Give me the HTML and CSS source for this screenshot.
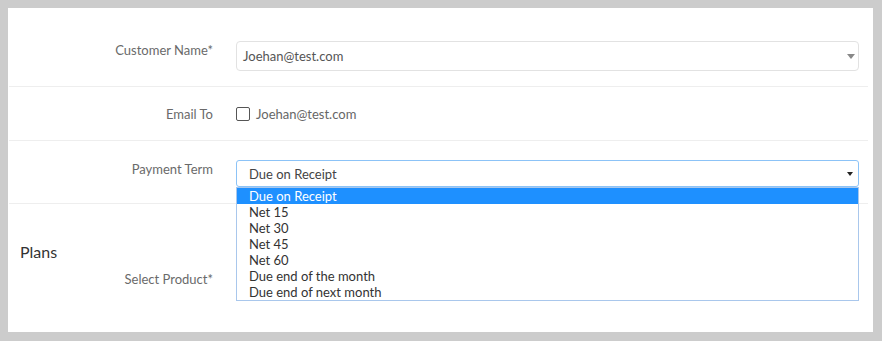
FILE: index.html
```html
<!DOCTYPE html>
<html lang="en">
<head>
    <meta charset="UTF-8">
    <meta name="viewport" content="width=device-width, initial-scale=1.0">
    <title>Invoice Form</title>
    <link rel="stylesheet" href="styles.css">
</head>
<body>
    <div class="panel">
        <div class="form-row row-customer">
            <label class="form-label">Customer Name*</label>
            <div class="form-field">
                <div class="select-box">
                    <span>Joehan@test.com</span>
                    <span class="caret"></span>
                </div>
            </div>
        </div>

        <div class="form-row row-email">
            <label class="form-label">Email To</label>
            <div class="form-field check-field">
                <input type="checkbox" id="emailTo">
                <label for="emailTo">Joehan@test.com</label>
            </div>
        </div>

        <div class="form-row row-term">
            <label class="form-label">Payment Term</label>
            <div class="form-field">
                <div class="select-box is-open">
                    <span>Due on Receipt</span>
                    <span class="caret caret-dark"></span>
                </div>
                <ul class="dropdown">
                    <li class="selected">Due on Receipt</li>
                    <li>Net 15</li>
                    <li>Net 30</li>
                    <li>Net 45</li>
                    <li>Net 60</li>
                    <li>Due end of the month</li>
                    <li>Due end of next month</li>
                </ul>
            </div>
        </div>

        <div class="section">
            <h3>Plans</h3>
            <div class="form-row plain">
                <label class="form-label">Select Product*</label>
                <div class="form-field"></div>
            </div>
        </div>
    </div>
</body>
</html>
```

FILE: styles.css
```css
* {
    margin: 0;
    padding: 0;
    box-sizing: border-box;
}

body {
    font-family: Lato, 'Open Sans', sans-serif;
    font-size: 13px;
    color: #555;
    background-color: #cccccc;
    padding: 8px 9px 9px 8px;
}

.panel {
    background-color: #fff;
    height: 324px;
    padding: 0 5px 0 1px;
}

.form-row {
    display: flex;
    align-items: flex-start;
    border-bottom: 1px solid #eeeeee;
}

.form-label {
    width: 204px;
    flex-shrink: 0;
    text-align: right;
    color: #6a6a6a;
    line-height: 18px;
}

.form-field {
    position: relative;
    flex: 1;
    margin: 0 9px 0 23px;
}

.row-customer {
    padding: 33px 0 15px;
}

.row-email {
    align-items: center;
    padding: 18px 0 17px;
}

.row-term {
    padding: 19px 0 16px;
}

.select-box {
    display: flex;
    justify-content: space-between;
    align-items: center;
    height: 30px;
    padding: 0 3px 0 6px;
    border: 1px solid #e2e2e2;
    border-radius: 4px;
    color: #555;
    background-color: #fff;
}

.select-box.is-open {
    height: 27px;
    padding: 1px 5px 0 12px;
    border-color: #8cc3f7;
    border-radius: 3px;
    color: #444;
}

.caret {
    width: 0;
    height: 0;
    border-left: 4px solid transparent;
    border-right: 4px solid transparent;
    border-top: 5px solid #888;
}

.caret-dark {
    border-left-width: 3px;
    border-right-width: 3px;
    border-top: 4px solid #222;
}

.check-field {
    display: flex;
    align-items: center;
    gap: 6px;
    line-height: 18px;
}

.check-field input {
    appearance: none;
    width: 14px;
    height: 14px;
    border: 1.5px solid #555;
    border-radius: 2px;
    background-color: #fff;
}

.check-field label {
    color: #666;
}

.dropdown {
    position: absolute;
    top: 100%;
    left: 0;
    right: 0;
    z-index: 10;
    list-style: none;
    background-color: #fff;
    border: 1px solid #a9c7ec;
    color: #333;
}

.dropdown li {
    line-height: 16px;
    padding-left: 12px;
}

.dropdown li.selected {
    background-color: #1e90ff;
    color: #fff;
}

.section {
    padding-top: 38px;
}

.section h3 {
    font-size: 16px;
    font-weight: normal;
    line-height: 20px;
    color: #333;
    padding-left: 11px;
}

.form-row.plain {
    border-bottom: none;
    margin-top: 8px;
}
```
